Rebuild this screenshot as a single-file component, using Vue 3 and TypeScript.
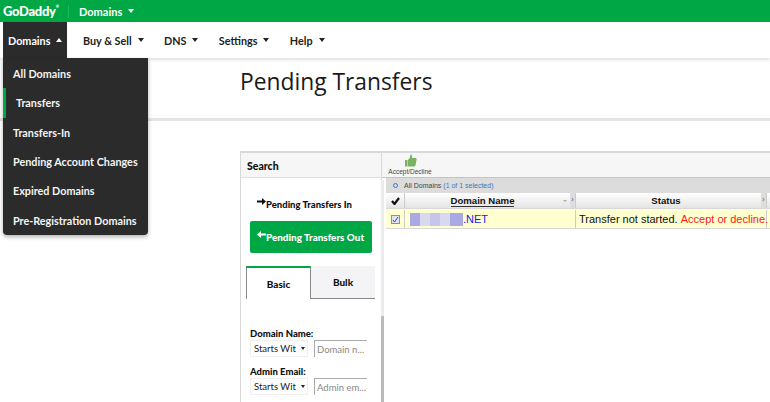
<script setup lang="ts">
const navItems = ['Buy & Sell', 'DNS', 'Settings', 'Help'];
const menuItems = [
  { label: 'All Domains', active: false },
  { label: 'Transfers', active: true },
  { label: 'Transfers-In', active: false },
  { label: 'Pending Account Changes', active: false },
  { label: 'Expired Domains', active: false },
  { label: 'Pre-Registration Domains', active: false },
];
const blurBlocks = [
  { color: '#a9a9e6', width: 10 },
  { color: '#d8d8ee', width: 10 },
  { color: '#c6c6ec', width: 10 },
  { color: '#d8d8ee', width: 10 },
  { color: '#a9a9e6', width: 13 },
];
</script>

<template>
  <div class="page">
    <header class="topbar">
      <span class="logo">GoDaddy<sup>®</sup></span>
      <span class="topbar-sep"></span>
      <span class="topbar-title">Domains</span>
      <span class="caret caret-white"></span>
    </header>

    <nav class="nav">
      <div class="nav-active">
        <span>Domains</span>
        <span class="caret caret-up"></span>
      </div>
      <div class="nav-links">
        <div v-for="item in navItems" :key="item" class="nav-link">
          <span>{{ item }}</span>
          <span class="caret caret-dark"></span>
        </div>
      </div>
      <ul class="menu">
        <li
          v-for="item in menuItems"
          :key="item.label"
          class="menu-item"
          :class="{ active: item.active }"
        >
          {{ item.label }}
        </li>
      </ul>
    </nav>

    <main class="main">
      <h1 class="title">Pending Transfers</h1>
      <div class="rule"></div>

      <section class="panel">
        <aside class="side">
          <div class="side-head">Search</div>
          <div class="side-body">
            <div class="link-in">
              <svg class="arrow" width="9" height="7" viewBox="0 0 9 7">
                <path d="M0 2.500h5V0l4 3.500L5 7V4.500H0z" fill="#111" />
              </svg>
              <span>Pending Transfers In</span>
            </div>
            <div class="link-out">
              <svg class="arrow" width="9" height="7" viewBox="0 0 9 7">
                <path d="M9 2.500H4V0L0 3.500 4 7V4.500h5z" fill="#fff" />
              </svg>
              <span>Pending Transfers Out</span>
            </div>
            <div class="tabs">
              <div class="tab tab-on">Basic</div>
              <div class="tab tab-off">Bulk</div>
            </div>
            <div class="field">
              <label>Domain Name:</label>
              <div class="field-row">
                <div class="select">Starts Wit<span class="caret caret-small"></span></div>
                <div class="input">Domain n...</div>
              </div>
            </div>
            <div class="field">
              <label>Admin Email:</label>
              <div class="field-row">
                <div class="select">Starts Wit<span class="caret caret-small"></span></div>
                <div class="input">Admin em...</div>
              </div>
            </div>
          </div>
          <div class="scroll"></div>
        </aside>

        <div class="content">
          <div class="toolbar">
            <div class="tool">
              <svg width="13" height="13" viewBox="0 0 13 13">
                <path
                  d="M1 6h2.500v6.500H1zM4 6l2-2.500L6.500.5c1.500 0 2 1.500 1.500 3.500h3.500c1 0 1.500 1 1 2l-1 5.500c-.2.700-.7 1-1.500 1H4z"
                  fill="#7ab264"
                />
              </svg>
              <span>Accept/Decline</span>
            </div>
          </div>
          <div class="grid">
            <div class="filter">
              <span class="filter-dot"></span>
              <span>All Domains <em>(1 of 1 selected)</em></span>
            </div>
            <div class="grid-row grid-head">
              <div class="cell cell-check">
                <svg width="9" height="8" viewBox="0 0 9 8">
                  <path d="M1 4l2.500 3L8 1" fill="none" stroke="#111" stroke-width="2.200" />
                </svg>
              </div>
              <div class="cell cell-name">
                <span class="head-label">Domain Name</span>
                <span class="sort"></span>
                <span class="handle">›</span>
              </div>
              <div class="cell cell-status">
                <b>Status</b>
                <span class="handle">›</span>
              </div>
            </div>
            <div class="grid-row grid-data">
              <div class="cell cell-check">
                <span class="check">
                  <svg width="7" height="7" viewBox="0 0 7 7">
                    <path d="M1 4l1.500 2L6 1" fill="none" stroke="#3b4fa0" stroke-width="1" />
                  </svg>
                </span>
              </div>
              <div class="cell cell-name">
                <span class="blur">
                  <span
                    v-for="(block, i) in blurBlocks"
                    :key="i"
                    :style="{ background: block.color, width: block.width + 'px' }"
                  ></span>
                </span>
                <span class="domain">.NET</span>
              </div>
              <div class="cell cell-status">
                Transfer not started.&nbsp;<span class="accept">Accept or decline.</span>
              </div>
            </div>
          </div>
        </div>
      </section>
    </main>
  </div>
</template>

<style scoped>
.page {
  width: 770px;
  height: 402px;
  overflow: hidden;
  background: #fff;
  font-family: Lato, "Liberation Sans", sans-serif;
  color: #111;
}

.topbar {
  display: flex;
  align-items: center;
  height: 22px;
  padding-left: 3px;
  background: #00a845;
  color: #fff;
}

.logo {
  font: 900 13px/1 Lato, sans-serif;
  letter-spacing: -0.3px;
  width: 59px;
}

.logo sup {
  font-size: 4px;
  vertical-align: top;
}

.topbar-sep {
  width: 1px;
  height: 13px;
  margin: 0 10px 0 6px;
  background: #1fb45d;
}

.topbar-title {
  font-size: 11px;
  font-weight: 700;
}

.caret {
  display: inline-block;
  width: 0;
  height: 0;
  border-left: 3.500px solid transparent;
  border-right: 3.500px solid transparent;
  border-top: 4px solid #222;
}

.caret-white {
  margin-left: 6px;
  border-top-color: #fff;
}

.caret-up {
  margin-left: 6px;
  border-top: 0;
  border-bottom: 4px solid #fff;
}

.caret-dark {
  margin-left: 6px;
}

.caret-small {
  margin-left: 5px;
  border-left-width: 2.500px;
  border-right-width: 2.500px;
  border-top-width: 3px;
}

.nav {
  position: relative;
  display: flex;
  height: 36px;
  box-shadow: 0 2px 3px rgba(0, 0, 0, 0.12);
  font-size: 10.800px;
  font-weight: 700;
}

.nav-active {
  display: flex;
  align-items: center;
  width: 64px;
  margin-left: 3px;
  padding-left: 5px;
  box-sizing: border-box;
  background: #2b2b2b;
  color: #fff;
}

.nav-links {
  display: flex;
  align-items: center;
  gap: 20.400px;
  padding-left: 16px;
  color: #222;
}

.nav-link {
  display: flex;
  align-items: center;
}

.menu {
  position: absolute;
  top: 36px;
  left: 3px;
  z-index: 2;
  width: 145px;
  height: 177px;
  margin: 0;
  padding: 1px 0 0;
  box-sizing: border-box;
  list-style: none;
  background: #2b2b2b;
  border-radius: 0 0 4px 4px;
  box-shadow: 0 2px 4px rgba(0, 0, 0, 0.3);
  color: #f4f4f4;
}

.menu-item {
  display: flex;
  align-items: center;
  height: 29.300px;
  padding-left: 10px;
}

.menu-item.active {
  padding-left: 10px;
  border-left: 3px solid #00a845;
}

.main {
  display: flex;
  flex-direction: column;
}

.title {
  margin: 8px 0 0 240px;
  font: 400 22.800px/32px "Open Sans", sans-serif;
  color: #1a1a1a;
}

.rule {
  height: 3px;
  margin-top: 20px;
  background: #e4e4e4;
}

.panel {
  display: flex;
  width: 530px;
  height: 260px;
  margin: 30px 0 0 240px;
  border-top: 2px solid #d8d8d8;
}

.side {
  position: relative;
  flex: none;
  width: 142px;
  box-sizing: border-box;
  border-left: 1px solid #d8d8d8;
  border-right: 1px solid #d8d8d8;
  font-weight: 900;
}

.side-head {
  height: 24px;
  padding-left: 6px;
  background: #f6f6f6;
  border-bottom: 1px solid #e0e0e0;
  font-size: 10.500px;
  line-height: 27px;
}

.side-body {
  padding: 10px 0 0 5px;
}

.link-in,
.link-out {
  display: flex;
  align-items: center;
  width: 122px;
  height: 32px;
  margin-left: 4px;
  padding-left: 7px;
  box-sizing: border-box;
  font-size: 9.500px;
}

.link-in {
  margin-bottom: 1px;
}

.link-out {
  background: #00a845;
  border-radius: 2px;
  color: #fff;
  font-size: 9.900px;
}

.arrow {
  margin: -5px 0 0 0;
}

.tabs {
  display: flex;
  width: 129px;
  height: 33px;
  margin-top: 13px;
  background: #f4f4f6;
  font-size: 10px;
}

.tab {
  display: flex;
  align-items: center;
  justify-content: center;
  box-sizing: border-box;
}

.tab-on {
  width: 65px;
  border-top: 2px solid #00a845;
  border-left: 1px solid #888;
  border-right: 1px solid #888;
  background: #fff;
}

.tab-off {
  flex: 1;
  border-bottom: 1px solid #888;
}

.field {
  margin-top: 10px;
  font-size: 9.500px;
}

.tabs + .field {
  margin-top: 30px;
}

.field label {
  display: block;
  line-height: 10px;
  margin-left: 4px;
}

.field-row {
  display: flex;
  gap: 6px;
  margin-left: 4px;
  margin-top: 1px;
}

.select {
  display: flex;
  align-items: center;
  width: 58px;
  height: 17px;
  padding-left: 3px;
  box-sizing: border-box;
  border: 1px solid #f0f0f0;
  font-weight: 400;
  color: #222;
}

.input {
  display: flex;
  align-items: center;
  width: 53px;
  height: 17px;
  padding-left: 2px;
  box-sizing: border-box;
  border-top: 1px solid #aaa;
  border-left: 1px solid #aaa;
  font-weight: 400;
  color: #888;
  white-space: nowrap;
  overflow: hidden;
}

.scroll {
  position: absolute;
  top: 27px;
  right: -3px;
  bottom: 0;
  width: 3px;
  background: linear-gradient(#ececec 136px, #bbb 136px);
}

.content {
  flex: 1;
  min-width: 0;
  font-family: "Liberation Sans", sans-serif;
}

.toolbar {
  height: 24px;
  background: #f6f6f6;
  border-bottom: 1px solid #c4c4c4;
}

.tool {
  display: flex;
  flex-direction: column;
  align-items: center;
  gap: 1px;
  width: 50px;
  padding-top: 1px;
  margin-left: 3px;
  font-size: 6.500px;
  color: #444;
}

.grid {
  padding-left: 4px;
}

.filter {
  display: flex;
  align-items: center;
  gap: 6px;
  height: 15px;
  padding-left: 7px;
  background: #dcdcdc;
  font-size: 7px;
  color: #444;
}

.filter em {
  font-style: normal;
  color: #3a78c4;
}

.filter-dot {
  width: 3px;
  height: 3px;
  border: 1.500px solid #3a78c4;
  border-radius: 50%;
}

.grid-row {
  display: flex;
}

.grid-head {
  height: 15px;
  background: linear-gradient(#fff, #e4e4e4);
  font-size: 9.600px;
}

.grid-data {
  height: 21px;
  padding-top: 1px;
  background: #ffffd0;
  border-top: 1px solid #d8d8d8;
  border-bottom: 1px solid #d8d8d8;
  font-size: 11px;
  box-sizing: border-box;
}

.cell {
  position: relative;
  display: flex;
  align-items: center;
  box-sizing: border-box;
  border-right: 1px solid #ccc;
}

.cell-check {
  width: 19px;
  justify-content: center;
}

.cell-name {
  width: 171px;
  padding-left: 5px;
}

.grid-head .cell-name,
.grid-head .cell-status {
  justify-content: center;
}

.grid-head .cell-status {
  padding: 0 10px 0 0;
}

.head-label {
  font-weight: 700;
  border-bottom: 1px solid #333;
  margin-right: 20px;
}

.sort {
  position: absolute;
  right: 8px;
  top: 7px;
  border-left: 2px solid transparent;
  border-right: 2px solid transparent;
  border-top: 2px solid #aaa;
}

.handle {
  position: absolute;
  right: 0;
  top: 0;
  width: 5px;
  height: 100%;
  background: #ddd;
  color: #555;
  font-size: 7px;
  line-height: 14px;
  text-align: center;
}

.cell-status {
  width: 191px;
  padding-left: 3px;
  white-space: nowrap;
}

.check {
  display: flex;
  align-items: center;
  justify-content: center;
  width: 7px;
  height: 7px;
  background: #dfe3f2;
  border: 1px solid #8a8fb0;
}

.blur {
  display: flex;
  height: 13px;
}

.domain {
  color: #1a1ae6;
}

.accept {
  color: #f81a1a;
}
</style>

<style>
html,
body {
  margin: 0;
  background: #fff;
}
</style>
